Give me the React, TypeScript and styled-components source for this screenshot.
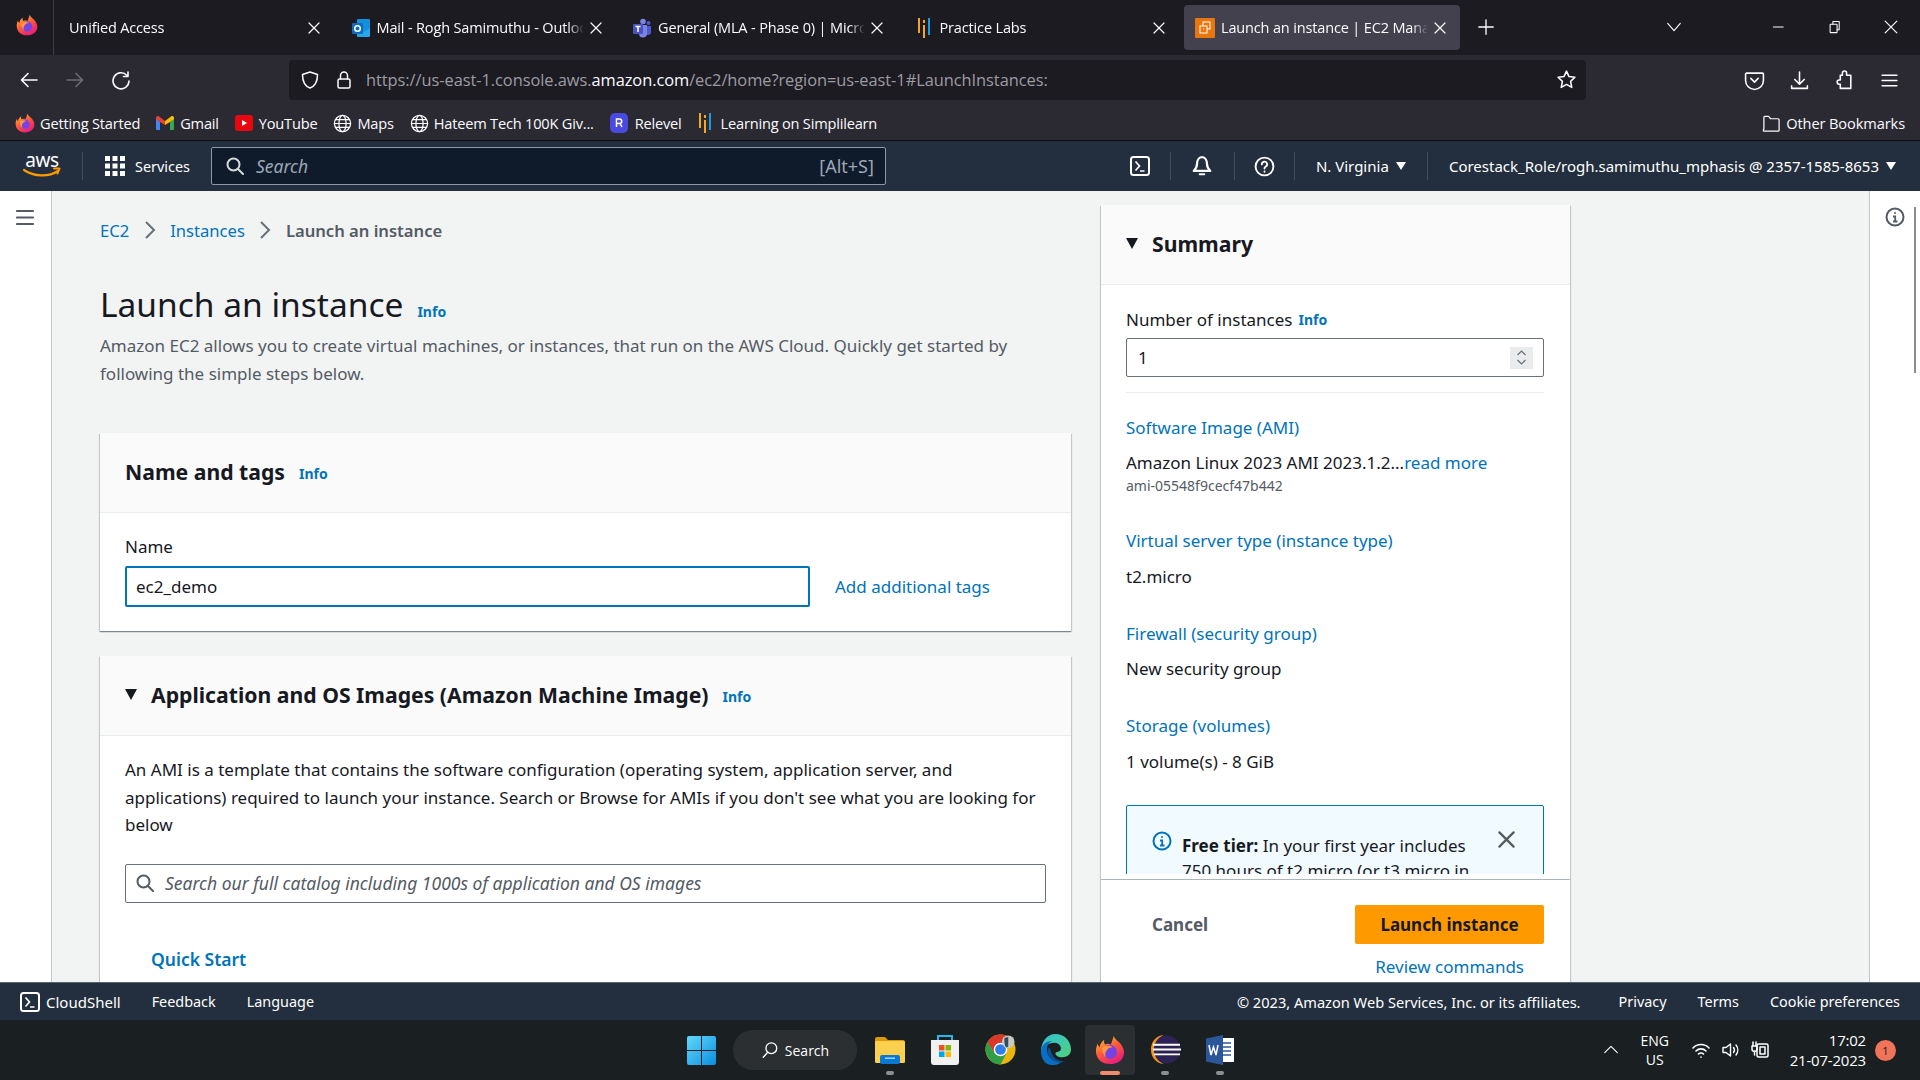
import React from 'react';
import styled, { createGlobalStyle } from 'styled-components';

const GlobalStyle = createGlobalStyle`
  * { box-sizing: border-box; }
  html, body { margin: 0; padding: 0; height: 100%; overflow: hidden; background: #1c1b22; }
  body { font-family: "Noto Sans", "Open Sans", sans-serif; }
  svg { display: block; flex-shrink: 0; }
`;

const Screen = styled.div`
  width: 1920px;
  height: 1080px;
  display: flex;
  flex-direction: column;
  overflow: hidden;
`;

/* ---------- browser chrome ---------- */
const TabStrip = styled.div`
  height: 55px;
  background: #1c1b22;
  display: flex;
  align-items: center;
  color: #fbfbfe;
  font-family: "Open Sans", sans-serif;
`;

const ViewButton = styled.div`
  width: 54px;
  height: 55px;
  border-right: 1px solid #3d3c45;
  display: flex;
  align-items: center;
  justify-content: center;
  padding-bottom: 6px;
`;

const TabList = styled.div`
  display: flex;
  gap: 5.5px;
  padding-left: 4px;
`;

const Tab = styled.div<{ $active?: boolean }>`
  width: 276px;
  height: 45px;
  padding: 0 14px 0 11px;
  display: flex;
  align-items: center;
  gap: 6px;
  border-radius: 4px;
  background: ${p => (p.$active ? '#42414d' : 'transparent')};
`;

const TabIcon = styled.span`
  width: 20px;
  height: 20px;
  display: flex;
  align-items: center;
  justify-content: center;
  flex-shrink: 0;
`;

const TabTitle = styled.span`
  flex: 1;
  overflow: hidden;
  white-space: nowrap;
  font-size: 14.5px;
  letter-spacing: -0.15px;
  -webkit-mask-image: linear-gradient(to right, #000 calc(100% - 16px), transparent 100%);
  mask-image: linear-gradient(to right, #000 calc(100% - 16px), transparent 100%);
`;

const TabTail = styled.div`
  flex: 1;
  display: flex;
  align-items: center;
  padding-left: 17px;
  padding-bottom: 1px;
`;

const Spacer = styled.div`
  flex: 1;
`;

const WinButtons = styled.div`
  display: flex;
  align-items: center;
  gap: 42px;
  padding-right: 22px;
  margin-left: 89px;
`;

const NavBar = styled.div`
  height: 51px;
  background: #2b2a33;
  display: flex;
  align-items: center;
  padding-bottom: 1px;
`;

const NavButtons = styled.div`
  display: flex;
  align-items: center;
  gap: 26px;
  width: 289px;
  padding-left: 19px;
`;

const UrlBar = styled.div`
  width: 1297px;
  height: 40px;
  margin-top: -1px;
  border-radius: 4px;
  background: #1c1b22;
  display: flex;
  align-items: center;
  padding: 0 9px 0 11px;
  gap: 14px;
`;

const UrlText = styled.div`
  flex: 1;
  font-family: "Open Sans", sans-serif;
  font-size: 16.4px;
  letter-spacing: -0.05px;
  line-height: 24px;
  padding-top: 1px;
  color: #9d9ca3;
  white-space: nowrap;
  margin-left: -2px;
  b { font-weight: 400; color: #fbfbfe; }
`;

const NavTools = styled.div`
  display: flex;
  align-items: center;
  gap: 24px;
  padding-left: 158px;
`;

const BookmarksBar = styled.div`
  height: 35px;
  background: #2b2a33;
  border-bottom: 1px solid #0c0c0d;
  display: flex;
  align-items: center;
  padding: 0 15px 0 15px;
  color: #fbfbfe;
  font-family: "Open Sans", sans-serif;
  font-size: 14.6px;
  letter-spacing: -0.2px;
`;

const Bookmark = styled.div<{ $gap?: number }>`
  display: flex;
  align-items: center;
  gap: ${p => p.$gap ?? 5}px;
  margin-right: 16px;
  white-space: nowrap;
  &:last-child { margin-right: 0; letter-spacing: -0.1px; }
`;

/* ---------- aws console ---------- */
const ConsoleHeader = styled.div`
  height: 50px;
  background: #232f3e;
  color: #fff;
  display: flex;
  align-items: center;
  font-size: 15px;
  padding-left: 22px;
`;

const LogoSlot = styled.div`
  margin-right: 20px;
`;

const HeaderDivider = styled.div`
  width: 1px;
  height: 28px;
  background: #414d5c;
`;

const ServicesButton = styled.div`
  display: flex;
  align-items: center;
  gap: 10px;
  margin: 0 21px 0 22px;
  font-size: 14.4px;
`;

const GlobalSearch = styled.div`
  width: 675px;
  height: 38px;
  background: #0f1b2a;
  border: 1px solid #8d99a8;
  border-radius: 2px;
  display: flex;
  align-items: center;
  padding: 0 11px 0 14px;
  gap: 12px;
  color: #9ba7b6;
  font-size: 17.5px;
  i { flex: 1; }
  span { font-size: 18px; }
`;

const HeaderIconSlot = styled.div<{ $w: number; $end?: boolean }>`
  width: ${p => p.$w}px;
  display: flex;
  justify-content: ${p => (p.$end ? 'flex-end' : 'center')};
  padding-right: ${p => (p.$end ? 20 : 0)}px;
`;

const HeaderMenu = styled.div<{ $w?: number }>`
  display: flex;
  align-items: center;
  gap: 7px;
  padding: 0 21px 0 21px;
  white-space: nowrap;
  width: ${p => (p.$w ? `${p.$w}px` : 'auto')};
`;

const Caret = styled.span<{ $color?: string; $size?: number }>`
  display: inline-block;
  flex-shrink: 0;
  width: 0;
  height: 0;
  border-left: ${p => (p.$size ?? 10) / 2}px solid transparent;
  border-right: ${p => (p.$size ?? 10) / 2}px solid transparent;
  border-top: ${p => ((p.$size ?? 10) * 0.85)}px solid ${p => p.$color ?? '#fff'};
`;

const Body = styled.div`
  height: 791px;
  display: flex;
  background: #f2f3f3;
  color: #16191f;
  overflow: hidden;
`;

const SideRail = styled.div`
  width: 52px;
  background: #fff;
  border-right: 1px solid #c4c8cc;
  padding: 17px 0 0 16px;
  flex-shrink: 0;
`;

const ToolRail = styled.div`
  position: relative;
  width: 51px;
  background: #fff;
  border-left: 1px solid #c4c8cc;
  padding: 16px 0 0 15px;
  flex-shrink: 0;
`;

const ScrollThumb = styled.div`
  position: absolute;
  top: 16px;
  right: 4px;
  width: 2px;
  height: 166px;
  background: #8c8c8c;
`;

const MainColumn = styled.div`
  width: 1019px;
  padding: 24px 0 0 48px;
  flex-shrink: 0;
`;

const Crumbs = styled.div`
  display: flex;
  align-items: center;
  font-size: 16.6px;
  height: 30px;
  a { color: #0073bb; }
  b { color: #545b64; font-weight: 600; }
`;

const CrumbSep = styled.span`
  margin: 0 14.5px;
`;

const PageTitle = styled.h1`
  margin: 36px 0 0;
  font-size: 33.5px;
  line-height: 46px;
  font-weight: 400;
  display: flex;
  align-items: baseline;
  gap: 14px;
`;

const InfoLink = styled.span`
  color: #0073bb;
  font-size: 14px;
  font-weight: 700;
`;

const HeadInfo = styled(InfoLink)`
  margin-top: 3px;
`;

const Lead = styled.p`
  margin: -3px 0 0;
  color: #545b64;
  font-size: 17px;
  line-height: 28px;
  width: 920px;
`;

const Card = styled.section`
  margin-top: 25px;
  background: #fff;
  box-shadow: 0 1px 1px 0 rgba(0, 28, 36, 0.3), 1px 1px 1px 0 rgba(0, 28, 36, 0.15), -1px 1px 1px 0 rgba(0, 28, 36, 0.15);
  &:first-of-type { margin-top: 45px; }
`;

const CardHead = styled.div`
  height: 80px;
  background: #fafafa;
  border-bottom: 1px solid #eaeded;
  padding: 0 25px 2px;
  display: flex;
  align-items: center;
  gap: 14px;
  h2 { margin: 0; font-size: 21.2px; font-weight: 700; line-height: 28px; }
`;

const NameBody = styled.div`
  padding: 22px 25px 24px;
`;

const AmiBody = styled.div`
  padding: 20px 25px 40px;
`;

const FieldLabel = styled.div`
  font-size: 17px;
  line-height: 24px;
  margin-bottom: 7px;
  display: flex;
  align-items: center;
  gap: 8px;
`;

const SummaryLabel = styled(FieldLabel)`
  margin: 1px 0 6px;
  gap: 6px;
`;

const NameRow = styled.div`
  display: flex;
  align-items: center;
  gap: 25px;
`;

const TextBox = styled.div<{ $focus?: boolean }>`
  height: ${p => (p.$focus ? 41 : 39)}px;
  display: flex;
  align-items: center;
  background: #fff;
  border-radius: 2px;
  border: ${p => (p.$focus ? '2px solid #0073bb' : '1px solid #687078')};
  padding: 0 9px;
  font-size: 17px;
  width: ${p => (p.$focus ? '685px' : '100%')};
`;

const BlueLink = styled.a`
  color: #0073bb;
  font-size: 17px;
  line-height: 24px;
`;

const AmiText = styled.p`
  margin: 0;
  font-size: 17px;
  line-height: 27.5px;
  color: #16191f;
`;

const AmiSearch = styled(TextBox)`
  margin-top: 25px;
  gap: 11px;
  padding: 0 10px;
  font-size: 17.5px;
  i { color: #545b64; }
`;

const QuickStart = styled.div`
  margin: 44px 0 0 26px;
  color: #0073bb;
  font-size: 17.5px;
  font-weight: 600;
`;

const Summary = styled.aside`
  width: 469px;
  margin: 14px 0 0 30px;
  background: #fff;
  box-shadow: 0 1px 1px 0 rgba(0, 28, 36, 0.3), 1px 1px 1px 0 rgba(0, 28, 36, 0.15), -1px 1px 1px 0 rgba(0, 28, 36, 0.15);
  display: flex;
  flex-direction: column;
  height: 800px;
  flex-shrink: 0;
`;

const SummaryScroll = styled.div`
  height: 595px;
  padding-bottom: 5px;
  border-bottom: 1px solid #aab7b8;
`;

const SummaryClip = styled.div`
  height: 100%;
  overflow: hidden;
  padding: 22px 26px 0 25px;
`;

const NumberBox = styled(TextBox)`
  justify-content: space-between;
  padding: 0 10px 0 11px;
`;

const Stepper = styled.span`
  width: 23px;
  height: 22px;
  background: #e9ebed;
  display: flex;
  align-items: center;
  justify-content: center;
`;

const Rule = styled.div`
  height: 1px;
  background: #eaeded;
  margin: 15px 0 22.5px;
`;

const SummaryBlock = styled.div`
  margin-bottom: 33px;
  font-size: 17px;
  line-height: 24px;
`;

const SummaryValue = styled.div`
  margin-top: 11.5px;
`;

const AmiId = styled.div`
  color: #545b64;
  font-size: 14px;
  line-height: 20px;
  margin-top: 1px;
`;

const FreeTier = styled.div`
  margin-top: -2px;
  border: 1px solid #0073bb;
  border-radius: 2px;
  background: #f1faff;
  padding: 25px 28px 0 25px;
  display: flex;
  gap: 10px;
  height: 120px;
`;

const FreeText = styled.div`
  flex: 1;
  font-size: 17px;
  line-height: 25px;
  padding-top: 2px;
  white-space: nowrap;
  b { font-weight: 700; }
`;

const SummaryFoot = styled.div`
  padding: 25px 26px 0 25px;
`;

const ActionRow = styled.div`
  display: flex;
  align-items: center;
  justify-content: space-between;
`;

const CancelLink = styled.span`
  color: #545b64;
  font-size: 17px;
  font-weight: 700;
  margin-left: 26px;
`;

const LaunchButton = styled.span`
  width: 189px;
  height: 39px;
  background: #ff9900;
  border-radius: 2px;
  display: flex;
  align-items: center;
  justify-content: center;
  font-size: 17px;
  font-weight: 700;
`;

const ReviewRow = styled.div`
  margin-top: 11px;
  text-align: right;
  padding-right: 20px;
`;

const ConsoleFooter = styled.div`
  height: 38px;
  background: #232f3e;
  border-top: 1px solid #59636e;
  color: #fff;
  font-size: 14.4px;
  display: flex;
  align-items: center;
  padding: 0 20px;
  gap: 31px;
  white-space: nowrap;
`;

const ShellLink = styled.span`
  display: flex;
  align-items: center;
  gap: 6px;
  font-size: 15px;
`;

const Copyright = styled.span`
  margin-right: 7px;
  font-size: 14.6px;
`;

/* ---------- windows taskbar ---------- */
const Taskbar = styled.div`
  height: 60px;
  background: #1a2022;
  color: #fff;
  display: flex;
  align-items: center;
  font-family: "Open Sans", sans-serif;
  font-size: 14px;
  padding-left: 687px;
`;

const TaskSearch = styled.div`
  width: 124px;
  height: 40px;
  margin: 0 18px 0 17px;
  border-radius: 20px;
  background: #2b2f31;
  display: flex;
  align-items: center;
  justify-content: center;
  gap: 6px;
`;

const TaskApp = styled.div<{ $active?: boolean }>`
  position: relative;
  width: ${p => (p.$active ? 50 : 30)}px;
  height: 50px;
  margin: 0 ${p => (p.$active ? 15 : 25)}px 0 0;
  margin-left: ${p => (p.$active ? -10 : 0)}px;
  border-radius: 4px;
  background: ${p => (p.$active ? '#2b2f31' : 'transparent')};
  display: flex;
  align-items: center;
  justify-content: center;
  padding-bottom: 1px;
`;

const RunDot = styled.span<{ $active?: boolean }>`
  position: absolute;
  bottom: 0;
  left: 50%;
  transform: translateX(-50%);
  width: ${p => (p.$active ? 20 : 8)}px;
  height: 4px;
  border-radius: 2px;
  background: ${p => (p.$active ? '#f28a6c' : '#8b8f91')};
`;

const Tray = styled.div`
  margin-left: auto;
  display: flex;
  align-items: center;
  padding-right: 24px;
`;

const LangStack = styled.div`
  width: 42px;
  margin: 0 15px 0 14px;
  text-align: center;
  line-height: 19.5px;
  font-size: 14px;
`;

const TrayIcons = styled.div`
  display: flex;
  align-items: center;
  gap: 10px;
`;

const Clock = styled.div`
  margin: 0 9px 0 19px;
  text-align: right;
  line-height: 20px;
  font-size: 15px;
  letter-spacing: -0.2px;
`;

const AlertBadge = styled.span`
  width: 21px;
  height: 21px;
  border-radius: 50%;
  background: #f0735a;
  color: #1a1a1a;
  font-size: 11px;
  display: flex;
  align-items: center;
  justify-content: center;
`;

/* ---------- drawings ---------- */
const Stroke = ({ size = 20, color = '#fbfbfe', w = 1.5, children }: { size?: number; color?: string; w?: number; children: React.ReactNode }) => (
  <svg width={size} height={size} viewBox="0 0 20 20" fill="none" stroke={color} strokeWidth={w} strokeLinecap="round" strokeLinejoin="round">
    {children}
  </svg>
);

const CloseX = ({ color = '#fbfbfe', size = 12, w = 1.2 }: { color?: string; size?: number; w?: number }) => (
  <svg width={size} height={size} viewBox="0 0 12 12" stroke={color} strokeWidth={w} strokeLinecap="round">
    <path d="M1 1l10 10M11 1L1 11" />
  </svg>
);

const FirefoxLogo = ({ size = 20 }: { size?: number }) => (
  <svg width={size} height={size} viewBox="0 0 32 32">
    <defs>
      <linearGradient id="ffo" x1="0.2" y1="0" x2="0.8" y2="1">
        <stop offset="0" stopColor="#ffbd30" />
        <stop offset="0.45" stopColor="#ff5a36" />
        <stop offset="1" stopColor="#e31587" />
      </linearGradient>
    </defs>
    <path d="M20 1c1 3 4 5 6 7 3 3 5 7 5 10 0 8-6 13-15 13S1 25 1 17c0-3 1-6 2-8 0 2 1 3 2 4 0-3 2-6 5-8-1 3 0 4 1 5 2-1 4-1 6 0 1-3 2-6 3-9z" fill="url(#ffo)" />
    <circle cx="16" cy="18" r="7.500" fill="#7542e5" />
    <path d="M8 13c3-2 8-2 11 0-3 0-5 1-6 3-2 2-3 5-1 8-3-2-5-7-4-11z" fill="#ff9640" />
  </svg>
);

const SimplilearnMark = () => (
  <svg width="14" height="22" viewBox="0 0 14 22">
    <rect x="1" y="1" width="2" height="15" fill="#f5a623" />
    <rect x="6" y="8" width="2" height="13" fill="#f5a623" />
    <rect x="6" y="3" width="2" height="3" fill="#f5a623" />
    <rect x="11" y="1" width="2" height="17" fill="#1e9be0" />
  </svg>
);

const OutlookLogo = () => (
  <svg width="20" height="20" viewBox="0 0 20 20">
    <rect x="6" y="1" width="13" height="17" rx="1" fill="#1490df" />
    <path d="M6 10l6.500 4 6.500-4v8a1 1 0 0 1-1 1H7a1 1 0 0 1-1-1z" fill="#28a8ea" />
    <rect x="1" y="5" width="11" height="11" rx="1" fill="#0f6cbd" />
    <circle cx="6.500" cy="10.500" r="2.800" fill="none" stroke="#fff" strokeWidth="1.500" />
  </svg>
);

const TeamsLogo = () => (
  <svg width="20" height="20" viewBox="0 0 20 20">
    <circle cx="11" cy="3.500" r="2.800" fill="#7b83eb" />
    <circle cx="16.500" cy="5" r="2" fill="#5059c9" />
    <path d="M13 8h6v6a3 3 0 0 1-6 0z" fill="#5059c9" />
    <path d="M6 7h9v8a4 4 0 0 1-8 1z" fill="#7b83eb" />
    <rect x="1" y="6" width="10" height="10" rx="1" fill="#4b53bc" />
    <path d="M3.500 8.500h5M6 8.500V14" stroke="#fff" strokeWidth="1.500" />
  </svg>
);

const Ec2Logo = () => (
  <svg width="20" height="20" viewBox="0 0 20 20" fill="none" stroke="#fff" strokeWidth="1">
    <rect width="20" height="20" rx="1" fill="#e8760f" stroke="none" />
    <rect x="8" y="4" width="7" height="7" />
    <rect x="5" y="8" width="7" height="7" fill="#e8760f" />
    <path d="M8 11h1" />
  </svg>
);

const GmailLogo = () => (
  <svg width="18" height="14" viewBox="0 0 18 14">
    <path d="M0 2v11a1 1 0 0 0 1 1h3V6z" fill="#4285f4" />
    <path d="M18 2v11a1 1 0 0 1-1 1h-3V6z" fill="#34a853" />
    <path d="M0 2c0-2 2-2.500 3-1.500L9 5v4L4 6 0 3z" fill="#ea4335" />
    <path d="M18 2c0-2-2-2.500-3-1.500L9 5v4l5-3 4-3z" fill="#fbbc04" />
  </svg>
);

const YouTubeLogo = () => (
  <svg width="18" height="18" viewBox="0 0 18 18">
    <rect y="1" width="18" height="16" rx="3" fill="#e8070f" />
    <path d="M7 6l5 3-5 3z" fill="#fff" />
  </svg>
);

const Globe = () => (
  <Stroke size={19} w={1.3}>
    <circle cx="10" cy="10" r="8.500" />
    <ellipse cx="10" cy="10" rx="3.800" ry="8.500" />
    <path d="M1.500 10h17M2.800 6h14.400M2.800 14h14.400" />
  </Stroke>
);

const RelevelLogo = () => (
  <svg width="18" height="20" viewBox="0 0 18 20">
    <rect width="18" height="20" rx="5" fill="#4a4ae0" />
    <path d="M6.500 14V6h3a2 2 0 0 1 0 4.500h-3M10 10.500l2 3.500" stroke="#fff" strokeWidth="1.500" fill="none" />
  </svg>
);

const ShellIcon = ({ size = 20 }: { size?: number }) => (
  <svg width={size} height={size} viewBox="0 0 20 20" fill="none" stroke="#fff" strokeWidth="2">
    <rect x="1" y="1" width="18" height="18" rx="2.500" />
    <path d="M5.500 5.500L9.500 10l-4 4.500M10 15h4.500" strokeWidth="1.700" />
  </svg>
);

const AwsLogo = () => (
  <svg width="40" height="34" viewBox="0 0 40 34">
    <text x="20" y="18" fontFamily="'Noto Sans', sans-serif" fontSize="19" letterSpacing="-0.4" fill="#fff" textAnchor="middle">aws</text>
    <path d="M2 21c10 7 25 7 34 1" stroke="#ff9900" strokeWidth="2.200" fill="none" strokeLinecap="round" />
    <path d="M32 19.500l5.500 0-2 5" stroke="#ff9900" strokeWidth="2" fill="none" strokeLinecap="round" strokeLinejoin="round" />
  </svg>
);

const WaffleIcon = () => (
  <svg width="20" height="20" viewBox="0 0 20 20" fill="#fff">
    {[0, 7.500, 15].map(y => [0, 7.500, 15].map(x => <rect key={`${x}-${y}`} x={x} y={y} width="5" height="5" />))}
  </svg>
);

const Chevron = () => (
  <svg width="12" height="20" viewBox="0 0 12 20" fill="none" stroke="#687078" strokeWidth="2">
    <path d="M2 2l8 8-8 8" />
  </svg>
);

const Magnifier = ({ color = '#d5dbdb', size = 18 }: { color?: string; size?: number }) => (
  <svg width={size} height={size} viewBox="0 0 18 18" fill="none" stroke={color} strokeWidth="2" strokeLinecap="round">
    <circle cx="7.500" cy="7.500" r="6" />
    <path d="M12 12l5 5" />
  </svg>
);

const InfoCircle = ({ color, size }: { color: string; size: number }) => (
  <svg width={size} height={size} viewBox="0 0 20 20" fill="none" stroke={color} strokeWidth="2">
    <circle cx="10" cy="10" r="8.500" />
    <path d="M8 9.500h2.200V14M8 14.500h4.500" strokeWidth="1.800" />
    <circle cx="10" cy="6" r="1" fill={color} stroke="none" />
  </svg>
);

const WindowsLogo = () => (
  <svg width="29" height="29" viewBox="0 0 29 29">
    <defs>
      <linearGradient id="win" x1="0" y1="0" x2="1" y2="1">
        <stop offset="0" stopColor="#63d8fb" />
        <stop offset="1" stopColor="#0a8fe0" />
      </linearGradient>
    </defs>
    <path d="M0 2a2 2 0 0 1 2-2h12v14H0zM15 0h12a2 2 0 0 1 2 2v12H15zM0 15h14v14H2a2 2 0 0 1-2-2zM15 15h14v12a2 2 0 0 1-2 2H15z" fill="url(#win)" />
  </svg>
);

const ExplorerIcon = () => (
  <svg width="30" height="28" viewBox="0 0 30 28">
    <path d="M0 3a2 2 0 0 1 2-2h8l3 3h15a2 2 0 0 1 2 2v4H0z" fill="#d99a0c" />
    <rect y="5" width="30" height="22" rx="1.500" fill="#fbd04f" />
    <rect x="5" y="19" width="20" height="9" rx="2" fill="#0a79d1" />
    <rect x="10" y="21.500" width="10" height="1.500" fill="#9fd6ff" />
  </svg>
);

const StoreIcon = () => (
  <svg width="30" height="31" viewBox="0 0 30 31">
    <path d="M8 6V2h14v4" fill="none" stroke="#23b7ee" strokeWidth="2" />
    <path d="M1 6h28v22a3 3 0 0 1-3 3H4a3 3 0 0 1-3-3z" fill="#f1f1f1" />
    <rect x="9" y="11" width="5.500" height="5.500" fill="#f25022" />
    <rect x="15.500" y="11" width="5.500" height="5.500" fill="#7fba00" />
    <rect x="9" y="17.500" width="5.500" height="5.500" fill="#00a4ef" />
    <rect x="15.500" y="17.500" width="5.500" height="5.500" fill="#ffb900" />
  </svg>
);

const ChromeIcon = () => (
  <svg width="31" height="31" viewBox="0 0 32 32">
    <circle cx="16" cy="16" r="15.500" fill="#e8b511" />
    <path d="M16 .5A15.500 15.500 0 0 0 2.600 8.300L9 19l7-9h13.500A15.500 15.500 0 0 0 16 .5z" fill="#d8382c" />
    <path d="M2.600 8.300A15.500 15.500 0 0 0 16 31.500L22 20H10z" fill="#2f9e47" />
    <circle cx="16" cy="16" r="7" fill="#fff" />
    <circle cx="16" cy="16" r="5.500" fill="#2f7de8" />
    <circle cx="24" cy="8" r="6.500" fill="#c9c9c2" />
    <path d="M20 4c0 4 0 8 2 10l2-1V3z" fill="#2e4a5e" />
  </svg>
);

const EdgeIcon = () => (
  <svg width="31" height="31" viewBox="0 0 32 32">
    <defs>
      <linearGradient id="edg" x1="0" y1="0" x2="1" y2="1">
        <stop offset="0" stopColor="#33c1d6" />
        <stop offset="1" stopColor="#4fd27a" />
      </linearGradient>
    </defs>
    <path d="M16 0c9 0 16 7 16 16 0 5-4 8-9 8-4 0-7-2-7-4s3-1 5-3c2-3-1-8-6-8-8 0-13 7-14 10C1 8 7 0 16 0z" fill="url(#edg)" />
    <path d="M1 18c0-7 6-11 12-11-5 2-7 7-5 13 2 6 9 9 15 8-4 4-9 4-12 4C5 31 1 25 1 18z" fill="#0a6fc2" />
    <path d="M9 14c-3 6 1 13 8 15 3 1 6 0 8-1-6 0-11-3-13-8-1-3-1-5-3-6z" fill="#0c4f95" />
  </svg>
);

const EclipseIcon = () => (
  <svg width="31" height="31" viewBox="0 0 32 32">
    <circle cx="17" cy="16" r="14.500" fill="#2c2255" />
    <path d="M14 1C6 2 1 8 1 16s5 14 13 15C8 28 4 23 4 16S8 4 14 1z" fill="#f7941e" />
    <path d="M3 11h28M3 16h29M4 21h27" stroke="#fff" strokeWidth="2" />
  </svg>
);

const WordIcon = () => (
  <svg width="28" height="30" viewBox="0 0 28 30">
    <rect x="12" y="3" width="16" height="24" fill="#fff" />
    <path d="M15 8h10M15 12h10M15 16h10M15 20h10" stroke="#2b579a" strokeWidth="1.500" />
    <path d="M0 3.500L17 0v30L0 26.500z" fill="#2b579a" />
    <path d="M3 10l2 10 2.500-8 2.500 8 2-10" fill="none" stroke="#fff" strokeWidth="1.500" />
  </svg>
);

const tabs = [
  { title: 'Unified Access', icon: null },
  { title: 'Mail - Rogh Samimuthu - Outlook', icon: <OutlookLogo /> },
  { title: 'General (MLA - Phase 0) | Microsoft Teams', icon: <TeamsLogo /> },
  { title: 'Practice Labs', icon: <SimplilearnMark /> },
  { title: 'Launch an instance | EC2 Management Console', icon: <Ec2Logo />, active: true },
];

const App = () => (
  <Screen>
    <GlobalStyle />
    <TabStrip>
      <ViewButton><FirefoxLogo size={22} /></ViewButton>
      <TabList>
        {tabs.map(t => (
          <Tab key={t.title} $active={t.active}>
            {t.icon && <TabIcon>{t.icon}</TabIcon>}
            <TabTitle>{t.title}</TabTitle>
            <CloseX />
          </Tab>
        ))}
      </TabList>
      <TabTail>
        <Stroke size={18} w={1.5}><path d="M10 2v16M2 10h16" /></Stroke>
        <Spacer />
        <Stroke size={18} w={1.3}><path d="M3 6l7 8 7-8" /></Stroke>
        <WinButtons>
          <Stroke size={14} w={1.5}><path d="M2 10h14" /></Stroke>
          <Stroke size={14} w={1.5}><rect x="3" y="6" width="10" height="12" rx="1" /><path d="M7 6V2h9v12h-3" /></Stroke>
          <CloseX size={14} w={1} />
        </WinButtons>
      </TabTail>
    </TabStrip>

    <NavBar>
      <NavButtons>
        <Stroke w={1.6}><path d="M18 10H3M9 3.500L2.500 10 9 16.500" /></Stroke>
        <Stroke color="#6d6c75" w={1.6}><path d="M2 10h15M11 3.500l6.500 6.500-6.500 6.500" /></Stroke>
        <Stroke w={1.6}><path d="M16 5.500A8 8 0 1 0 18 11M17 2v4.500h-4.500" /></Stroke>
      </NavButtons>
      <UrlBar>
        <Stroke><path d="M10 2l7.500 2.500c0 7-2 11.500-7.500 13.500C4.500 16 2.500 11.500 2.500 4.500z" /></Stroke>
        <Stroke><rect x="4" y="9" width="12" height="9" rx="1.500" /><path d="M6.500 9V5.500a3.500 3.500 0 0 1 7 0V9" /></Stroke>
        <UrlText>https://us-east-1.console.aws.<b>amazon.com</b>/ec2/home?region=us-east-1#LaunchInstances:</UrlText>
        <Stroke size={21}><path d="M10 2l2.400 5.200 5.600.7-4.100 3.900 1.100 5.700L10 14.700l-5 2.800 1.100-5.700L2 7.900l5.600-.7z" /></Stroke>
      </UrlBar>
      <NavTools>
        <Stroke size={21}><path d="M2.500 3h15a1 1 0 0 1 1 1v6a8.500 8.500 0 0 1-17 0V4a1 1 0 0 1 1-1z" /><path d="M6.500 8l3.500 3.500L13.500 8" /></Stroke>
        <Stroke size={21}><path d="M10 2v11M5.500 9l4.500 4.500L14.500 9M2.500 15v2.500h15V15" /></Stroke>
        <Stroke size={21}><path d="M8 3a2 2 0 0 1 4 0v2h4v12.500H6v-4H5a2 2 0 0 1 0-4h1V5h2z" /></Stroke>
        <Stroke size={21}><path d="M3 5h14M3 10h14M3 15h14" /></Stroke>
      </NavTools>
    </NavBar>

    <BookmarksBar>
      <Bookmark><FirefoxLogo size={20} />Getting Started</Bookmark>
      <Bookmark $gap={6}><GmailLogo />Gmail</Bookmark>
      <Bookmark $gap={6}><YouTubeLogo />YouTube</Bookmark>
      <Bookmark $gap={5}><Globe />Maps</Bookmark>
      <Bookmark $gap={5}><Globe />Hateem Tech 100K Giv...</Bookmark>
      <Bookmark $gap={7}><RelevelLogo />Relevel</Bookmark>
      <Bookmark $gap={9}><SimplilearnMark />Learning on Simplilearn</Bookmark>
      <Spacer />
      <Bookmark>
        <Stroke size={19} w={1.3}><path d="M2 16V3.500a1 1 0 0 1 1-1h4l2 2.500h8a1 1 0 0 1 1 1V17a1 1 0 0 1-1 1H3a1 1 0 0 1-1-2z" /></Stroke>
        Other Bookmarks
      </Bookmark>
    </BookmarksBar>

    <ConsoleHeader>
      <LogoSlot><AwsLogo /></LogoSlot>
      <HeaderDivider />
      <ServicesButton><WaffleIcon />Services</ServicesButton>
      <GlobalSearch>
        <Magnifier />
        <i>Search</i>
        <span>[Alt+S]</span>
      </GlobalSearch>
      <HeaderIconSlot $w={284} $end><ShellIcon /></HeaderIconSlot>
      <HeaderDivider />
      <HeaderIconSlot $w={63}>
        <Stroke size={22} color="#fff" w={2}><path d="M10 2c3 0 4.500 3 4.500 6 0 3 1 4.500 3 6.500h-15c2-2 3-3.500 3-6.500 0-3 1.500-6 4.500-6zM8 17.500h4" /></Stroke>
      </HeaderIconSlot>
      <HeaderDivider />
      <HeaderIconSlot $w={59}>
        <Stroke size={21} color="#fff" w={1.8}><circle cx="10" cy="10" r="8.500" /><path d="M7.500 8a2.500 2.500 0 1 1 3.500 2.200c-.7.4-1 .9-1 1.800M10 14.700v.3" /></Stroke>
      </HeaderIconSlot>
      <HeaderDivider />
      <HeaderMenu $w={132}>N. Virginia <Caret /></HeaderMenu>
      <HeaderDivider />
      <HeaderMenu>Corestack_Role/rogh.samimuthu_mphasis @ 2357-1585-8653 <Caret /></HeaderMenu>
    </ConsoleHeader>

    <Body>
      <SideRail>
        <Stroke size={20} color="#545b64" w={2.2}><path d="M1 3h16M1 9.500h16M1 16h16" /></Stroke>
      </SideRail>

      <MainColumn>
        <Crumbs>
          <a>EC2</a>
          <CrumbSep><Chevron /></CrumbSep>
          <a>Instances</a>
          <CrumbSep><Chevron /></CrumbSep>
          <b>Launch an instance</b>
        </Crumbs>
        <PageTitle>Launch an instance <InfoLink>Info</InfoLink></PageTitle>
        <Lead>Amazon EC2 allows you to create virtual machines, or instances, that run on the AWS Cloud. Quickly get started by following the simple steps below.</Lead>

        <Card>
          <CardHead><h2>Name and tags</h2><HeadInfo>Info</HeadInfo></CardHead>
          <NameBody>
            <FieldLabel>Name</FieldLabel>
            <NameRow>
              <TextBox $focus>ec2_demo</TextBox>
              <BlueLink>Add additional tags</BlueLink>
            </NameRow>
          </NameBody>
        </Card>

        <Card>
          <CardHead>
            <Caret $color="#16191f" $size={13} />
            <h2>Application and OS Images (Amazon Machine Image)</h2>
            <HeadInfo>Info</HeadInfo>
          </CardHead>
          <AmiBody>
            <AmiText>An AMI is a template that contains the software configuration (operating system, application server, and applications) required to launch your instance. Search or Browse for AMIs if you don't see what you are looking for below</AmiText>
            <AmiSearch><Magnifier color="#545b64" /><i>Search our full catalog including 1000s of application and OS images</i></AmiSearch>
            <QuickStart>Quick Start</QuickStart>
          </AmiBody>
        </Card>
      </MainColumn>

      <Summary>
        <CardHead>
          <Caret $color="#16191f" $size={13} />
          <h2>Summary</h2>
        </CardHead>
        <SummaryScroll>
          <SummaryClip>
            <SummaryLabel>Number of instances <InfoLink>Info</InfoLink></SummaryLabel>
            <NumberBox>
              1
              <Stepper>
                <svg width="11" height="15" viewBox="0 0 11 15" fill="none" stroke="#687078" strokeWidth="1.200"><path d="M1.500 5l4-4 4 4M1.500 10l4 4 4-4" /></svg>
              </Stepper>
            </NumberBox>
            <Rule />
            <SummaryBlock>
              <BlueLink>Software Image (AMI)</BlueLink>
              <SummaryValue>Amazon Linux 2023 AMI 2023.1.2...<BlueLink>read more</BlueLink></SummaryValue>
              <AmiId>ami-05548f9cecf47b442</AmiId>
            </SummaryBlock>
            <SummaryBlock>
              <BlueLink>Virtual server type (instance type)</BlueLink>
              <SummaryValue>t2.micro</SummaryValue>
            </SummaryBlock>
            <SummaryBlock>
              <BlueLink>Firewall (security group)</BlueLink>
              <SummaryValue>New security group</SummaryValue>
            </SummaryBlock>
            <SummaryBlock>
              <BlueLink>Storage (volumes)</BlueLink>
              <SummaryValue>1 volume(s) - 8 GiB</SummaryValue>
            </SummaryBlock>
            <FreeTier>
              <InfoCircle color="#0073bb" size={20} />
              <FreeText><b>Free tier:</b> In your first year includes<br />750 hours of t2.micro (or t3.micro in</FreeText>
              <CloseX color="#545b64" size={17} w={1.6} />
            </FreeTier>
          </SummaryClip>
        </SummaryScroll>
        <SummaryFoot>
          <ActionRow>
            <CancelLink>Cancel</CancelLink>
            <LaunchButton>Launch instance</LaunchButton>
          </ActionRow>
          <ReviewRow><BlueLink>Review commands</BlueLink></ReviewRow>
        </SummaryFoot>
      </Summary>

      <Spacer />

      <ToolRail>
        <InfoCircle color="#545b64" size={20} />
        <ScrollThumb />
      </ToolRail>
    </Body>

    <ConsoleFooter>
      <ShellLink><ShellIcon />CloudShell</ShellLink>
      <span>Feedback</span>
      <span>Language</span>
      <Spacer />
      <Copyright>© 2023, Amazon Web Services, Inc. or its affiliates.</Copyright>
      <span>Privacy</span>
      <span>Terms</span>
      <span>Cookie preferences</span>
    </ConsoleFooter>

    <Taskbar>
      <WindowsLogo />
      <TaskSearch>
        <Stroke size={18} color="#fff" w={1.5}><circle cx="11.500" cy="8" r="6" /><path d="M7.500 12.500L2.500 18" /></Stroke>
        Search
      </TaskSearch>
      <TaskApp><ExplorerIcon /><RunDot /></TaskApp>
      <TaskApp><StoreIcon /></TaskApp>
      <TaskApp><ChromeIcon /></TaskApp>
      <TaskApp><EdgeIcon /></TaskApp>
      <TaskApp $active><FirefoxLogo size={30} /><RunDot $active /></TaskApp>
      <TaskApp><EclipseIcon /><RunDot /></TaskApp>
      <TaskApp><WordIcon /><RunDot /></TaskApp>
      <Tray>
        <Stroke size={18} color="#fff" w={1.2}><path d="M3 13l7-7 7 7" /></Stroke>
        <LangStack>ENG<br />US</LangStack>
        <TrayIcons>
          <Stroke size={20} color="#fff" w={1.6}><path d="M2 8a11 11 0 0 1 16 0M5 11a7 7 0 0 1 10 0M7.500 14a3.500 3.500 0 0 1 5 0M10 17v.2" /></Stroke>
          <Stroke size={20} color="#fff" w={1.4}><path d="M2 7.500h3L9.500 4v12L5 12.500H2zM12.500 7.500a4 4 0 0 1 0 5M15 5a8 8 0 0 1 0 10" /></Stroke>
          <Stroke size={20} color="#fff" w={1.5}><rect x="6" y="4" width="11" height="13" rx="1.500" /><path d="M2 2v4M5 2v4M1 6h5v3a2 2 0 0 1-5 0zM3.500 11v4M9 7v7h5V7z" /></Stroke>
        </TrayIcons>
        <Clock>17:02<br />21-07-2023</Clock>
        <AlertBadge>1</AlertBadge>
      </Tray>
    </Taskbar>
  </Screen>
);

export default App;
